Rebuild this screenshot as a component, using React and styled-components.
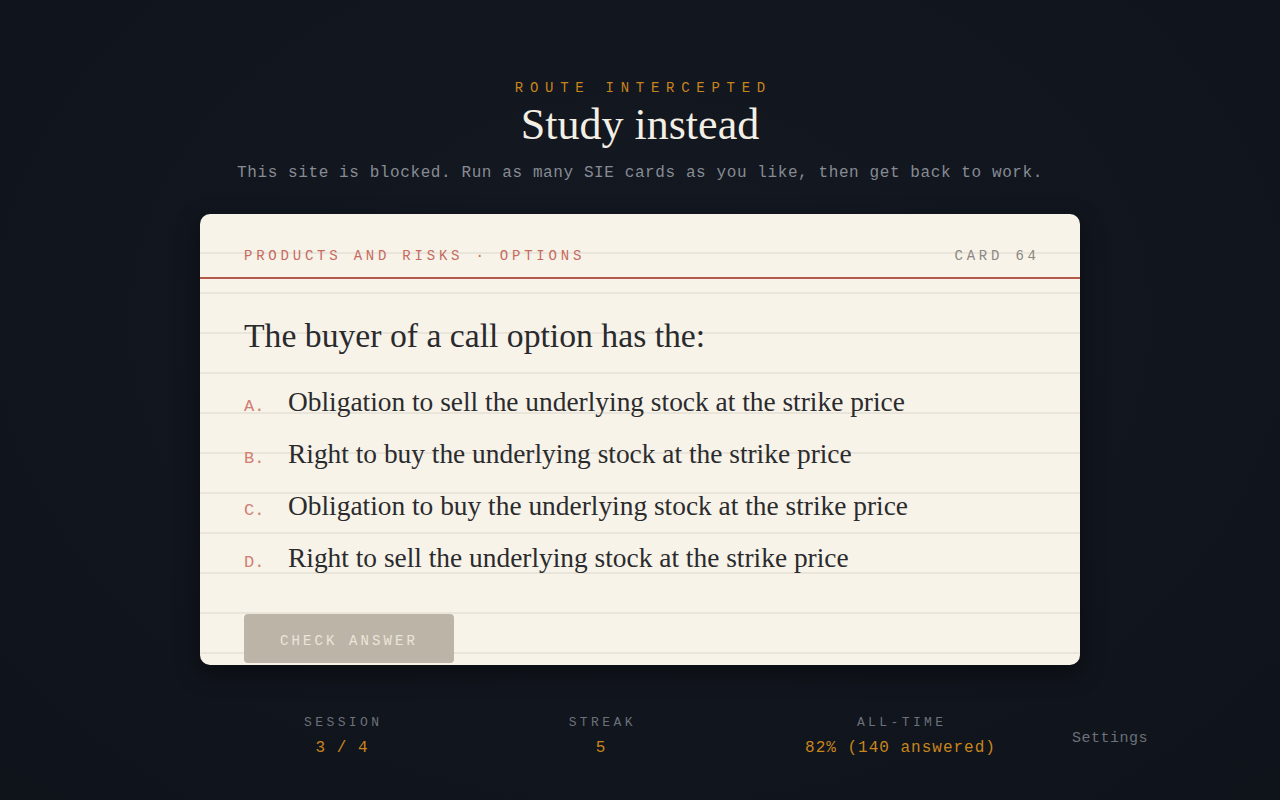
import React from "react";
import styled, { createGlobalStyle } from "styled-components";

const GlobalStyle = createGlobalStyle`
  html, body {
    margin: 0;
    padding: 0;
    background: #12161f;
  }
  body {
    min-height: 800px;
    background: radial-gradient(ellipse at 50% 40%, #141923 0%, #11151d 60%, #0f131a 100%);
  }
`;

const Page = styled.div`
  min-height: 800px;
  display: flex;
  flex-direction: column;
  align-items: center;
  padding-top: 78px;
  box-sizing: border-box;
`;

const Kicker = styled.div`
  font-family: "Liberation Mono", monospace;
  font-size: 14px;
  letter-spacing: 0.48em;
  margin-right: -0.48em;
  color: #c8851c;
  line-height: 20px;
`;

const Title = styled.h1`
  margin: 1px 0 0;
  font-family: "Liberation Serif", serif;
  font-weight: 400;
  font-size: 44px;
  line-height: 52px;
  color: #f4efe4;
`;

const Subtitle = styled.p`
  margin: 11px 0 0;
  font-family: "Liberation Mono", monospace;
  font-size: 16px;
  letter-spacing: 0.6px;
  color: #878b93;
  line-height: 22px;
`;

const Card = styled.section`
  margin-top: 30px;
  width: 880px;
  box-sizing: border-box;
  border-radius: 10px;
  overflow: hidden;
  background-color: #f7f3e9;
  background-image: repeating-linear-gradient(
    to bottom,
    transparent 0px,
    transparent 38px,
    #e9e5da 38px,
    #e9e5da 40px
  );
  box-shadow: 0 8px 24px rgba(0, 0, 0, 0.45);
  padding-bottom: 2px;
`;

const CardHead = styled.header`
  box-sizing: border-box;
  display: flex;
  justify-content: space-between;
  align-items: center;
  height: 65px;
  padding: 20px 44px 0;
  border-bottom: 2px solid #b5594c;
  font-family: "Liberation Mono", monospace;
  font-size: 14px;
  letter-spacing: 0.27em;
  text-transform: uppercase;
`;

const Topic = styled.span`
  color: #c66a5f;
`;

const CardNo = styled.span`
  color: #8c8782;
  margin-right: -0.27em;
`;

const Body = styled.div`
  padding: 35px 44px 0;
`;

const Question = styled.h2`
  margin: 0 0 18px;
  font-family: "Liberation Serif", serif;
  font-weight: 400;
  font-size: 33.7px;
  line-height: 44px;
  color: #2a2a2c;
`;

const Options = styled.ol`
  list-style: none;
  margin: 0;
  padding: 0;
`;

const Option = styled.li`
  display: flex;
  align-items: baseline;
  height: 52px;
  line-height: 52px;
  cursor: pointer;
`;

const Letter = styled.span`
  width: 44px;
  flex: none;
  font-family: "Liberation Mono", monospace;
  font-size: 17px;
  color: #d27d72;
`;

const OptionText = styled.span`
  font-family: "Liberation Serif", serif;
  font-size: 27.4px;
  color: #2b2b2d;
`;

const CheckButton = styled.button`
  margin-top: 30px;
  width: 210px;
  height: 49px;
  padding: 5px 0 0;
  border: 0;
  border-radius: 4px;
  background: #bcb5a7;
  color: #ebe5d9;
  font-family: "Liberation Mono", monospace;
  font-size: 14px;
  letter-spacing: 3.1px;
  text-transform: uppercase;
  display: block;
`;

const Footer = styled.footer`
  margin-top: 49px;
  display: flex;
  align-items: center;
  padding-left: 155px;
`;

const Stats = styled.div`
  display: flex;
  gap: 150px;
`;

const Stat = styled.div`
  min-width: 109px;
  display: flex;
  flex-direction: column;
  align-items: center;
  gap: 6px;
  font-family: "Liberation Mono", monospace;
`;

const StatLabel = styled.span`
  font-size: 13px;
  letter-spacing: 3.4px;
  margin-right: -3.4px;
  color: #6c717a;
  line-height: 18px;
`;

const StatValue = styled.span`
  font-size: 16px;
  color: #c8851c;
  line-height: 20px;
  letter-spacing: 1px;
  margin-right: -1px;
`;

const SettingsLink = styled.a`
  margin-left: 77px;
  padding-top: 4px;
  font-family: "Liberation Mono", monospace;
  font-size: 15px;
  color: #6c717a;
  letter-spacing: 0.5px;
  cursor: pointer;
`;

const options = [
  ["A", "Obligation to sell the underlying stock at the strike price"],
  ["B", "Right to buy the underlying stock at the strike price"],
  ["C", "Obligation to buy the underlying stock at the strike price"],
  ["D", "Right to sell the underlying stock at the strike price"],
];

const stats = [
  ["Session", "3 / 4"],
  ["Streak", "5"],
  ["All-time", "82% (140 answered)"],
];

export default function App() {
  return (
    <>
      <GlobalStyle />
      <Page>
        <Kicker>ROUTE INTERCEPTED</Kicker>
        <Title>Study instead</Title>
        <Subtitle>
          This site is blocked. Run as many SIE cards as you like, then get back to work.
        </Subtitle>
        <Card>
          <CardHead>
            <Topic>Products and Risks · Options</Topic>
            <CardNo>Card 64</CardNo>
          </CardHead>
          <Body>
            <Question>The buyer of a call option has the:</Question>
            <Options>
              {options.map(([l, t]) => (
                <Option key={l}>
                  <Letter>{l}.</Letter>
                  <OptionText>{t}</OptionText>
                </Option>
              ))}
            </Options>
            <CheckButton disabled>Check answer</CheckButton>
          </Body>
        </Card>
        <Footer>
          <Stats>
            {stats.map(([label, value]) => (
              <Stat key={label}>
                <StatLabel>{label.toUpperCase()}</StatLabel>
                <StatValue>{value}</StatValue>
              </Stat>
            ))}
          </Stats>
          <SettingsLink>Settings</SettingsLink>
        </Footer>
      </Page>
    </>
  );
}
